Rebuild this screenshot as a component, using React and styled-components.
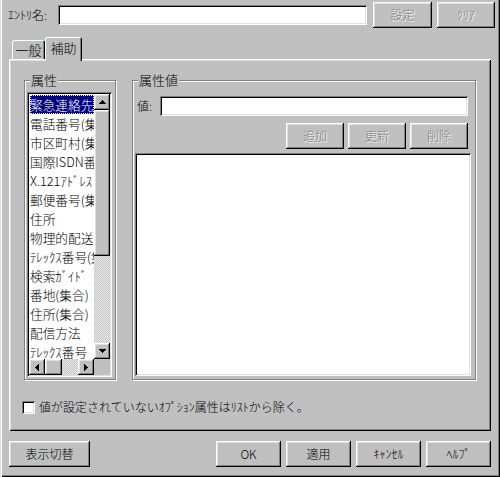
import React from "react";
import styled, { createGlobalStyle, css } from "styled-components";

const GlobalStyle = createGlobalStyle`
  html, body { margin: 0; padding: 0; }
  body {
    font-family: "Noto Sans CJK JP", "Liberation Sans", sans-serif;
    font-size: 12px;
    font-weight: 300;
    color: #000;
  }
  * { box-sizing: border-box; }
`;

const dither = css`
  background-color: #c0c0c0;
  background-image: repeating-conic-gradient(#c5c5c5 0 25%, #bababa 0 50%);
  background-size: 2px 2px;
`;

const raised = css`
  box-shadow: inset -1px -1px #000, inset 1px 1px #fff, inset -2px -2px #808080,
    inset 2px 2px #dfdfdf;
`;

const sunken = css`
  box-shadow: inset 1px 1px #808080, inset -1px -1px #fff, inset 2px 2px #000,
    inset -2px -2px #dfdfdf;
`;

const Window = styled.div`
  ${dither};
  width: 500px;
  height: 477px;
  padding-top: 2px;
  display: flex;
  flex-direction: column;
  box-shadow: inset 1px 0 #dfdfdf, inset 2px 0 #fff, inset -1px -1px #000,
    inset -2px -2px #808080;
`;

const TopRow = styled.div`
  display: flex;
  align-items: center;
  height: 26px;
  margin: 0 5px 0 8px;
`;

const Label = styled.span`
  width: ${(p) => p.$w || 50}px;
  line-height: 14px;
  white-space: nowrap;
`;

const TextField = styled.div`
  ${sunken};
  background: #fff;
  width: ${(p) => p.$w}px;
  height: 20px;
`;

const Button = styled.div`
  ${dither};
  ${raised};
  width: ${(p) => p.$w}px;
  height: 26px;
  margin-left: ${(p) => p.$ml || 0}px;
  display: flex;
  align-items: center;
  justify-content: center;
  line-height: 14px;
  white-space: nowrap;
  color: ${(p) => (p.$disabled ? "#808080" : "#000")};
  text-shadow: ${(p) => (p.$disabled ? "1px 1px 0 #fff" : "none")};
`;

const TabArea = styled.div`
  margin: 9px 0 0 9px;
  width: 482px;
`;

const TabStrip = styled.div`
  display: flex;
  align-items: flex-end;
  height: 22px;
  padding-left: 3px;
`;

const Tab = styled.div`
  ${dither};
  position: relative;
  width: ${(p) => p.$w}px;
  height: ${(p) => (p.$active ? 24 : 19)}px;
  margin-bottom: ${(p) => (p.$active ? -2 : 0)}px;
  z-index: ${(p) => (p.$active ? 2 : 0)};
  display: flex;
  align-items: center;
  justify-content: center;
  padding-bottom: ${(p) => (p.$active ? 3 : 0)}px;
  line-height: 14px;
  font-size: 13px;
  border-radius: 2px 2px 0 0;
  box-shadow: inset 1px 1px #fff, inset -1px 0 #000, inset -2px 0 #808080;
`;

const Panel = styled.div`
  ${dither};
  position: relative;
  height: 372px;
  padding: 21px 15px 0 15px;
  box-shadow: inset 1px 1px #fff, inset -1px -1px #000, inset 2px 2px #dfdfdf,
    inset -2px -2px #808080;
`;

const GroupsRow = styled.div`
  display: flex;
  gap: 16px;
  height: 300px;
`;

const GroupBox = styled.div`
  position: relative;
  width: ${(p) => p.$w}px;
  height: 100%;
  border: 1px solid #808080;
  box-shadow: inset 1px 1px #fff, 1px 1px #fff;
  padding: ${(p) => p.$pad};
  display: flex;
  flex-direction: column;
`;

const GroupTitle = styled.span`
  ${dither};
  position: absolute;
  top: -8px;
  left: 5px;
  padding: 0 1px;
  line-height: 14px;
  font-size: 13px;
`;

const ListBox = styled.div`
  ${sunken};
  background: #fff;
  width: 85px;
  height: 285px;
  padding: 2px;
  display: grid;
  grid-template-columns: 65px 16px;
  grid-template-rows: 265px 16px;
`;

const ListItems = styled.div`
  overflow: hidden;
  padding: 1px 0 0 1px;
`;

const ListItem = styled.div`
  height: 19px;
  line-height: 19px;
  font-size: 12.7px;
  white-space: nowrap;
  overflow: hidden;
  background: ${(p) => (p.$selected ? "#000080" : "transparent")};
  color: ${(p) => (p.$selected ? "#fff" : "#000")};
  outline: ${(p) => (p.$selected ? "1px dotted #ffff80" : "none")};
  outline-offset: -1px;
`;

const ScrollV = styled.div`
  display: flex;
  flex-direction: column;
`;

const ScrollH = styled.div`
  display: flex;
`;

const ScrollBtn = styled.div`
  ${dither};
  ${raised};
  width: ${(p) => p.$w || 16}px;
  height: ${(p) => p.$h || 16}px;
  flex: none;
  display: flex;
  align-items: center;
  justify-content: center;
`;

const Track = styled.div`
  flex: 1;
  background-color: #dcdcdc;
  background-image: repeating-conic-gradient(#e6e6e6 0 25%, #c8c8c8 0 50%);
  background-size: 2px 2px;
`;

const Corner = styled.div`
  ${dither};
`;

const ValueRow = styled.div`
  display: flex;
  align-items: center;
  padding: 0 3px 0 2px;
`;

const ActionRow = styled.div`
  display: flex;
  justify-content: flex-end;
  gap: 4px;
  margin-top: 7px;
  padding-right: 3px;
`;

const ValueList = styled.div`
  ${sunken};
  background: #fff;
  margin-top: 4px;
  flex: 1;
`;

const CheckRow = styled.div`
  display: flex;
  align-items: center;
  margin: 20px 0 0 -2px;
`;

const CheckBox = styled.div`
  ${sunken};
  background: #fff;
  width: 13px;
  height: 13px;
  margin-right: 4px;
`;

const BottomRow = styled.div`
  display: flex;
  margin: 10px 9px 0 9px;
`;

const Spacer = styled.div`
  flex: 1;
`;

const Arrow = ({ dir }) => {
  const rows = [1, 3, 5, 7];
  const horiz = dir === "left" || dir === "right";
  const order = dir === "down" || dir === "right" ? [...rows].reverse() : rows;
  return (
    <svg width={horiz ? 4 : 7} height={horiz ? 7 : 4} shapeRendering="crispEdges">
      {order.map((len, i) =>
        horiz ? (
          <rect key={i} x={i} y={(7 - len) / 2} width={1} height={len} fill="#000" />
        ) : (
          <rect key={i} x={(7 - len) / 2} y={i} width={len} height={1} fill="#000" />
        )
      )}
    </svg>
  );
};

const attributes = [
  "緊急連絡先",
  "電話番号(集合)",
  "市区町村(集合)",
  "国際ISDN番号",
  "X.121ｱﾄﾞﾚｽ",
  "郵便番号(集合)",
  "住所",
  "物理的配送ｵﾌｨｽ名",
  "ﾃﾚｯｸｽ番号(集合)",
  "検索ｶﾞｲﾄﾞ",
  "番地(集合)",
  "住所(集合)",
  "配信方法",
  "ﾃﾚｯｸｽ番号",
];

export default function App() {
  return (
    <>
      <GlobalStyle />
      <Window>
        <TopRow>
          <Label>ｴﾝﾄﾘ名:</Label>
          <TextField $w={309} />
          <Button $w={59} $ml={6} $disabled>
            設定
          </Button>
          <Button $w={58} $ml={5} $disabled>
            ｸﾘｱ
          </Button>
        </TopRow>

        <TabArea>
          <TabStrip>
            <Tab $w={33}>一般</Tab>
            <Tab $w={37} $active>
              補助
            </Tab>
          </TabStrip>
          <Panel>
            <GroupsRow>
              <GroupBox $w={92} $pad="11px 0 0 2px">
                <GroupTitle>属性</GroupTitle>
                <ListBox>
                  <ListItems>
                    {attributes.map((a, i) => (
                      <ListItem key={a + i} $selected={i === 0}>
                        {a}
                      </ListItem>
                    ))}
                  </ListItems>
                  <ScrollV>
                    <ScrollBtn>
                      <Arrow dir="up" />
                    </ScrollBtn>
                    <ScrollBtn $h={146} />
                    <Track />
                    <ScrollBtn>
                      <Arrow dir="down" />
                    </ScrollBtn>
                  </ScrollV>
                  <ScrollH>
                    <ScrollBtn>
                      <Arrow dir="left" />
                    </ScrollBtn>
                    <ScrollBtn $w={17} />
                    <Track />
                    <ScrollBtn>
                      <Arrow dir="right" />
                    </ScrollBtn>
                  </ScrollH>
                  <Corner />
                </ListBox>
              </GroupBox>

              <GroupBox $w={344} $pad="15px 4px 3px 2px">
                <GroupTitle>属性値</GroupTitle>
                <ValueRow>
                  <Label $w={23}>値:</Label>
                  <TextField $w={308} />
                </ValueRow>
                <ActionRow>
                  <Button $w={58} $disabled>
                    追加
                  </Button>
                  <Button $w={58} $disabled>
                    更新
                  </Button>
                  <Button $w={58} $disabled>
                    削除
                  </Button>
                </ActionRow>
                <ValueList />
              </GroupBox>
            </GroupsRow>

            <CheckRow>
              <CheckBox />
              <Label>値が設定されていないｵﾌﾟｼｮﾝ属性はﾘｽﾄから除く。</Label>
            </CheckRow>
          </Panel>
        </TabArea>

        <BottomRow>
          <Button $w={81}>表示切替</Button>
          <Spacer />
          <Button $w={65}>OK</Button>
          <Button $w={65} $ml={5}>
            適用
          </Button>
          <Button $w={65} $ml={5}>
            ｷｬﾝｾﾙ
          </Button>
          <Button $w={65} $ml={5}>
            ﾍﾙﾌﾟ
          </Button>
        </BottomRow>
      </Window>
    </>
  );
}
